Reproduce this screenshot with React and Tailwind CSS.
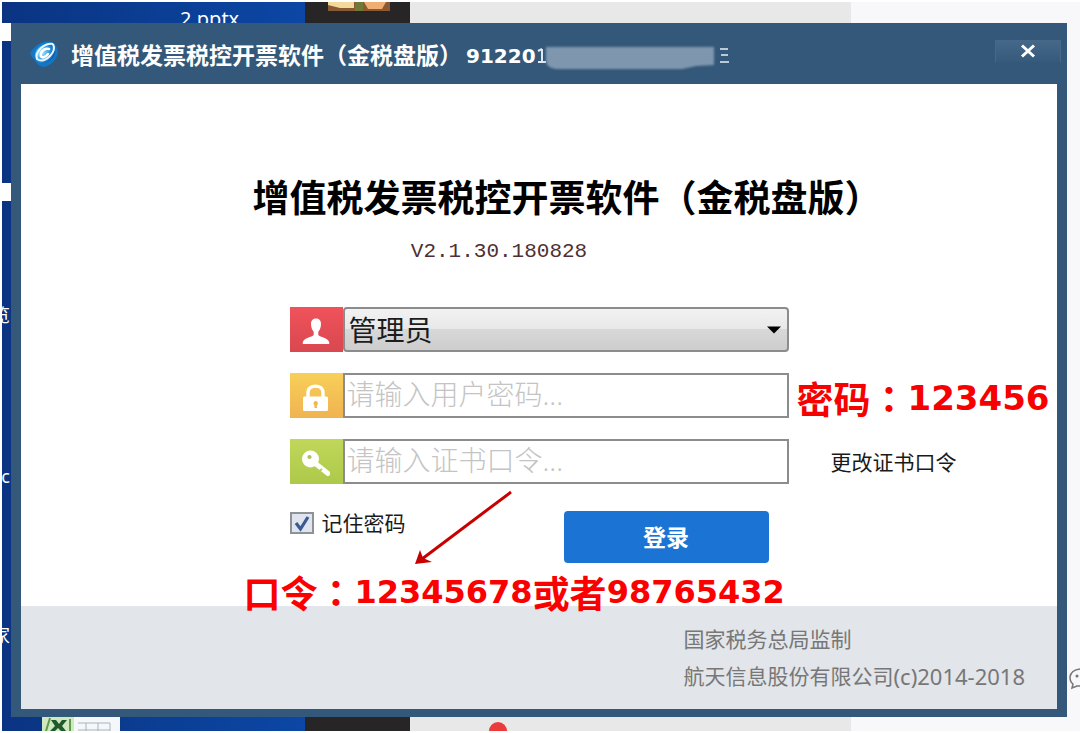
import React from "react";

const cjk = "font-['Noto_Sans','Noto_Sans_CJK_SC',sans-serif]";

function Logo() {
  return (
    <svg viewBox="0 0 30 30" className="h-[30px] w-[30px] shrink-0" aria-hidden="true">
      <defs>
        <radialGradient id="orb" cx="0.4" cy="0.35" r="0.65">
          <stop offset="0" stopColor="#b9ecff" />
          <stop offset="0.5" stopColor="#3aa5ea" />
          <stop offset="1" stopColor="#0b5fb0" />
        </radialGradient>
      </defs>
      <path d="M1 14 Q5 7 12 4 Q20 0 26 5 Q31 12 27 19 Q22 27 15 28 Q8 27 5 20 Q2 18 1 14Z" fill="#1277c6" />
      <ellipse cx="16" cy="14.500" rx="11" ry="9" transform="rotate(-38 16 14.500)" fill="url(#orb)" />
      <path d="M24 5 Q27 11 21 17 Q14 24 8 20 Q6 15 12 9 Q18 4 24 5" fill="none" stroke="#eaf8ff" strokeWidth="2" />
      <path d="M20 10 Q15 9 12.500 13 Q10.500 18 14 18.500 Q17 18 19 15" fill="none" stroke="#ffffff" strokeWidth="2.500" strokeLinecap="round" />
    </svg>
  );
}

function UserIcon() {
  return (
    <svg viewBox="0 0 28 28" className="h-7 w-7" fill="#fff" aria-hidden="true">
      <path d="M14 0.500C10.500 0.500 8.800 3 9 6.500C9.200 10 10.500 12.500 11.700 13.800V17C10 19 2 20 0.800 24V26H27.200V24C26 20 18 19 16.300 17V13.800C17.500 12.500 18.800 10 19 6.500C19.200 3 17.500 0.500 14 0.500Z" />
    </svg>
  );
}

function LockIcon() {
  return (
    <svg viewBox="0 0 28 28" className="h-7 w-7" aria-hidden="true">
      <path d="M6 14V8.500C6 0 21 0 21 8.500V14" fill="none" stroke="#fff" strokeWidth="3.400" />
      <rect x="1" y="12.500" width="25" height="14.500" rx="1.500" fill="#fff" />
      <path d="M13.700 17a2.300 2.300 0 0 1 1.200 4.200V24h-2.400v-2.800A2.300 2.300 0 0 1 13.700 17Z" fill="#f2b64c" />
    </svg>
  );
}

function KeyIcon() {
  return (
    <svg viewBox="0 0 28 28" className="h-7 w-7" aria-hidden="true">
      <circle cx="8.500" cy="9" r="8.500" fill="#fff" />
      <circle cx="7.500" cy="7" r="2.100" fill="#a9c45a" />
      <path d="M14 14L26 23.500" stroke="#fff" strokeWidth="4.800" strokeLinecap="round" />
      <path d="M17.500 21l2.500-2" stroke="#b7d04f" strokeWidth="2" />
    </svg>
  );
}

function Tile({ htmlFor, label, className, children }) {
  return (
    <label htmlFor={htmlFor} aria-label={label} className={"flex w-[53px] shrink-0 items-center justify-center pt-1 " + className}>
      {children}
    </label>
  );
}

function Desktop() {
  return (
    <div className="absolute inset-0 overflow-hidden bg-white p-0.5" aria-hidden="true">
      <div className="relative flex h-full">
        <div className="w-[303px] shrink-0 bg-gradient-to-r from-[#0a3482] to-[#0b47a5]" />
        <div className="w-[105px] shrink-0 bg-[#282526]" />
        <div className="w-[441px] shrink-0 bg-[#e9e8e9]" />
        <div className="grow bg-[#f8f7f9]" />

        <span className="absolute left-[178px] top-[3px] font-['Noto_Sans',sans-serif] text-xl leading-7 text-white">2.pptx</span>
        <svg viewBox="0 0 62 9" className="absolute left-[326px] top-0 h-[9px] w-[62px]">
          <rect width="62" height="9" fill="#8a5a35" />
          <path d="M0 0h26v6H12L0 3Z" fill="#f3d99b" />
          <rect x="27" width="8" height="9" fill="#6e7a35" />
          <path d="M36 0h22l-4 7H40Z" fill="#f0ae72" />
        </svg>

        <div className="absolute left-0 top-[21px] h-[18px] w-[9px] bg-white" />
        <div className="absolute left-0 top-[181px] h-[18px] w-[9px] bg-white" />
        <div className="absolute left-0 top-[300px] flex w-2 justify-end overflow-hidden font-['Noto_Sans_CJK_SC',sans-serif] text-lg leading-6 text-white">览</div>
        <div className="absolute left-0 top-[462px] flex w-2 justify-end overflow-hidden font-['Noto_Sans',sans-serif] text-lg leading-6 text-white">c</div>
        <div className="absolute left-0 top-[620px] flex w-2 justify-end overflow-hidden font-['Noto_Sans_CJK_SC',sans-serif] text-lg leading-6 text-white">家</div>

        <svg viewBox="0 0 78 14" className="absolute bottom-0 left-10 h-3.5 w-[78px]">
          <rect width="34" height="14" fill="#cfe8bf" />
          <path d="M4 14L8 1M28 14V2" stroke="#5f9a4f" strokeWidth="2" />
          <path d="M9 3h5l3 4 3-4h5l-5 6 4 5h-5l-3-3-3 3H8l5-5Z" fill="#1f5a2c" />
          <rect x="32" width="46" height="14" fill="#f4f8fb" />
          <path d="M36 6h32M36 13h32M44 6v8M56 6v8M68 6v8" stroke="#a9b4bd" strokeWidth="1" fill="none" />
        </svg>
        <svg viewBox="0 0 20 10" className="absolute bottom-0 left-[486px] h-2.5 w-5">
          <circle cx="10" cy="10" r="9" fill="#ea3a3a" />
        </svg>
        <svg viewBox="0 0 12 24" className="absolute right-0 top-[664px] h-6 w-3" fill="none" stroke="#777" strokeWidth="1.500">
          <path d="M12 3Q3 4 2 11Q2 16 5 18L4 22L9 20H12" />
          <circle cx="9" cy="10" r="0.800" fill="#777" />
        </svg>
      </div>
    </div>
  );
}

function TitleBar() {
  return (
    <header className="-mr-1 flex h-[61px] items-center pl-2">
      <Logo />
      <div className="ml-3 flex items-start whitespace-nowrap pt-1 font-bold text-white">
        <span className="font-['Noto_Sans_CJK_SC',sans-serif] text-[23px] leading-7">增值税发票税控开票软件（金税盘版）</span>
        <span className="ml-1 font-['DejaVu_Sans',sans-serif] text-xl leading-8">91220</span>
        <svg viewBox="0 0 194 32" className="h-8 w-[194px]" aria-hidden="true">
          <defs>
            <filter id="smear" x="-10%" y="-30%" width="120%" height="160%">
              <feGaussianBlur stdDeviation="1.200" />
            </filter>
          </defs>
          <path d="M2 22h8M6 9v12M2 11l4-2" stroke="#dfe9f2" strokeWidth="2" fill="none" />
          <path d="M10 7H178V25L160 26L146 29H20Q10 28 10 20Z" fill="#7f97ae" filter="url(#smear)" />
          <path d="M184 9h8M185 15h7M184 22h9" stroke="#b9c9d8" strokeWidth="2" />
        </svg>
      </div>
      <button type="button" aria-label="关闭" className="mb-1.5 ml-auto flex h-[22px] w-[66px] items-center justify-center border-x border-[#46698a] bg-gradient-to-b from-[#46698a] to-[#365a7b]">
        <svg viewBox="0 0 16 14" className="h-3.5 w-4" aria-hidden="true">
          <path d="M2 1.500L14 12.500M14 1.500L2 12.500" stroke="#fff" strokeWidth="3" />
        </svg>
      </button>
    </header>
  );
}

export default function App() {
  return (
    <div className={"relative min-h-screen overflow-hidden pb-4 pl-[11px] pr-[15px] pt-[23px] " + cjk}>
      <Desktop />
      <section className="relative bg-[#34587a] px-2.5 pb-2">
        <TitleBar />
        <main className="bg-white pb-[43px] pt-[88px]">
          <h1 className="whitespace-nowrap pl-14 text-center font-['Noto_Sans_CJK_SC',sans-serif] text-[37px] font-bold leading-[48px] text-black">
            增值税发票税控开票软件（金税盘版）
          </h1>
          <p className="mt-5 pr-20 text-center font-['Liberation_Mono',monospace] text-[21px] leading-6 text-[#4f2f33]">V2.1.30.180828</p>

          <form className="relative mt-[43px] grid grid-cols-[1fr_499px_1fr] gap-y-[21px]" onSubmit={(e) => e.preventDefault()}>
            <div className="relative col-start-2 row-start-1 flex h-[45px]">
              <Tile htmlFor="user" label="用户" className="bg-gradient-to-b from-[#f0525a] to-[#d94850]">
                <UserIcon />
              </Tile>
              <select id="user" className="min-w-0 grow appearance-none rounded border-2 border-[#8c8c8c] bg-[linear-gradient(#f2f2f2,#e8e8e8_48%,#d8d8d8_50%,#cdcdcd)] pl-1 text-[28px] leading-9 text-[#1c1c1c]">
                <option>管理员</option>
              </select>
              <svg viewBox="0 0 14 8" className="pointer-events-none absolute right-2 top-[19px] h-2 w-3.5" aria-hidden="true">
                <path d="M0 0.500H14L7 7.500Z" fill="#000" />
              </svg>
            </div>

            <div className="col-start-2 row-start-2 flex h-[45px]">
              <Tile htmlFor="password" label="用户密码" className="bg-gradient-to-b from-[#f8cf58] to-[#f0b351]">
                <LockIcon />
              </Tile>
              <input id="password" type="password" placeholder="请输入用户密码..." className="min-w-0 grow border-2 border-[#8c8c8c] bg-white pb-1 pl-0.5 text-[28px] font-light leading-9 placeholder:text-[#c4c4c4]" />
            </div>
            <p className="col-start-3 row-start-2 flex h-[45px] items-center whitespace-nowrap pl-2 pt-[5px] font-bold text-[#f60000]">
              <span className="font-['Noto_Sans_CJK_SC',sans-serif] text-[37px] leading-10">密码</span>
              <span className="font-['Noto_Sans_CJK_TC',sans-serif] text-[37px] leading-10">：</span>
              <span className="font-['DejaVu_Sans',sans-serif] text-[34px] leading-10">123456</span>
            </p>

            <div className="col-start-2 row-start-3 flex h-[45px]">
              <Tile htmlFor="cert" label="证书口令" className="bg-gradient-to-b from-[#c0d75a] to-[#adc94a]">
                <KeyIcon />
              </Tile>
              <input id="cert" type="password" placeholder="请输入证书口令..." className="min-w-0 grow border-2 border-[#8c8c8c] bg-white pb-1 pl-0.5 text-[28px] font-light leading-9 placeholder:text-[#c4c4c4]" />
            </div>
            <a href="#change" className="col-start-3 row-start-3 self-center whitespace-nowrap pl-[42px] text-[21px] leading-7 text-[#1a1a1a]">更改证书口令</a>

            <div className="col-start-2 row-start-4 flex justify-between pr-5 pt-1.5">
              <div className="flex h-6 items-center gap-2">
                <span className="relative flex">
                  <input id="remember" type="checkbox" defaultChecked className="peer h-[22px] w-6 appearance-none border-2 border-[#8d9298] bg-[#dfe4ee]" />
                  <svg viewBox="0 0 24 22" className="pointer-events-none absolute inset-0 hidden h-[22px] w-6 peer-checked:block" aria-hidden="true">
                    <path d="M6 11L10.500 17L18 5" fill="none" stroke="#3c5a92" strokeWidth="3.200" />
                  </svg>
                </span>
                <label htmlFor="remember" className="text-[21px] leading-7 text-[#1a1a1a]">记住密码</label>
              </div>
              <button type="submit" className="h-[52px] w-[205px] rounded-sm bg-[#1b74d4] text-[23px] font-bold leading-8 text-white">登录</button>
            </div>

            <div className="pointer-events-none relative col-start-2 row-start-4">
              <svg viewBox="0 0 100 78" className="absolute -top-4 left-[124px] h-[78px] w-[100px]" aria-hidden="true">
                <path d="M97 3L8 70" stroke="#c80000" strokeWidth="3" />
                <path d="M1 75L6 61L9 69L18 73Z" fill="#c80000" />
              </svg>
              <p className="absolute -left-[46px] top-[65px] flex items-center whitespace-nowrap font-bold text-[#fb0000]">
                <span className="font-['Noto_Sans_CJK_SC',sans-serif] text-[37px] leading-[45px]">口令</span>
                <span className="font-['Noto_Sans_CJK_TC',sans-serif] text-[37px] leading-[45px]">：</span>
                <span className="font-['DejaVu_Sans',sans-serif] text-[32px] leading-[45px]">12345678</span>
                <span className="font-['Noto_Sans_CJK_SC',sans-serif] text-[37px] leading-[45px]">或者</span>
                <span className="font-['DejaVu_Sans',sans-serif] text-[32px] leading-[45px]">98765432</span>
              </p>
            </div>
          </form>
        </main>
        <footer className="flex justify-end bg-[#e2e5e9] pb-3.5 pr-8 pt-[15px] text-[21px] leading-[37px] text-[#777]">
          <div>
            <p>国家税务总局监制</p>
            <p className="flex">
              <span>航天信息股份有限公司</span>
              <span className="text-[22px]">(c)2014-2018</span>
            </p>
          </div>
        </footer>
      </section>
    </div>
  );
}
